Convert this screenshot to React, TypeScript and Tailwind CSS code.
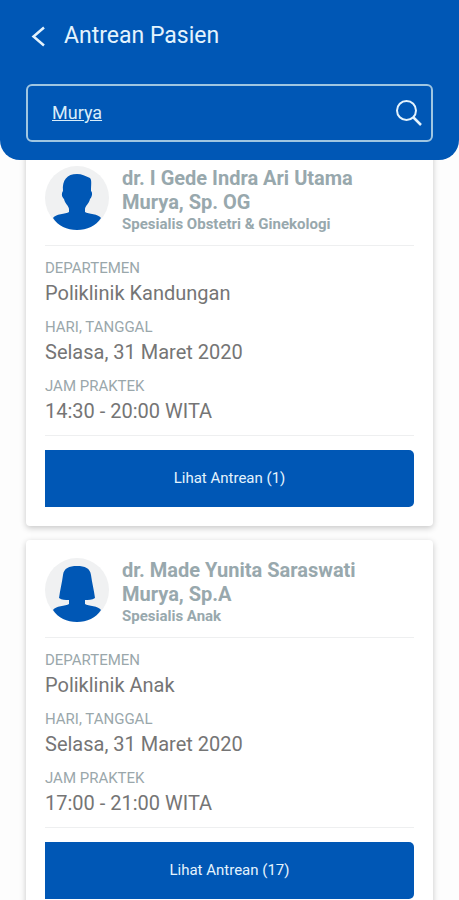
import { useState } from "react";

type Schedule = {
  name: string;
  specialty: string;
  department: string;
  date: string;
  hours: string;
  queue: number;
  avatar: "male" | "female";
};

const schedules: Schedule[] = [
  {
    name: "dr. I Gede Indra Ari Utama Murya, Sp. OG",
    specialty: "Spesialis Obstetri & Ginekologi",
    department: "Poliklinik Kandungan",
    date: "Selasa, 31 Maret 2020",
    hours: "14:30 - 20:00 WITA",
    queue: 1,
    avatar: "male",
  },
  {
    name: "dr. Made Yunita Saraswati Murya, Sp.A",
    specialty: "Spesialis Anak",
    department: "Poliklinik Anak",
    date: "Selasa, 31 Maret 2020",
    hours: "17:00 - 21:00 WITA",
    queue: 17,
    avatar: "female",
  },
];

function Avatar({ kind }: { kind: "male" | "female" }) {
  return (
    <svg viewBox="0 0 64 64" className="size-16 shrink-0" aria-hidden="true">
      <circle cx="32" cy="32" r="32" fill="#f0f1f2" />
      {kind === "male" ? (
        <path
          fill="#0057b5"
          d="M32 8C37 8 40 10 45 12C47 14 46 19 46 25C48 27 47 31 45 33C44 38 40 40 40 43V46C43 48 54 48 56 52C51 60 42 64 32 64C22 64 13 60 8 52C10 48 21 48 24 46V43C24 40 20 38 19 33C17 31 16 28 18 25C17 14 22 8 32 8Z"
        />
      ) : (
        <path
          fill="#0057b5"
          d="M32 8C40 8 45 10 46 17C47 25 49 32 50 40C47 42 43 42 40 42V46C43 48 54 48 56 52C51 60 42 64 32 64C22 64 13 60 8 52C10 48 21 48 24 46V42C20 42 17 42 14 40C15 32 17 25 18 17C19 10 24 8 32 8Z"
        />
      )}
    </svg>
  );
}

function Field({ label, value }: { label: string; value: string }) {
  return (
    <div>
      <dt className="text-[15px] leading-6 text-[#9aa7ab]">{label}</dt>
      <dd className="text-xl leading-[26px] text-[#757575]">{value}</dd>
    </div>
  );
}

function ScheduleCard({ item }: { item: Schedule }) {
  return (
    <article className="rounded bg-white px-[19px] pt-[18px] pb-[19px] shadow-[0_2px_6px_rgba(0,0,0,0.22)]">
      <div className="flex gap-[13px]">
        <Avatar kind={item.avatar} />
        <div className="min-w-0 flex-1">
          <h2 className="pr-8 text-xl leading-6 font-bold text-[#98a8ad]">{item.name}</h2>
          <p className="text-[15px] leading-5 font-bold text-[#98a8ad]">{item.specialty}</p>
        </div>
      </div>
      <dl className="mt-[11px] flex flex-col gap-[9px] border-y border-[#eeeff0] pt-[10px] pb-[11px]">
        <Field label="DEPARTEMEN" value={item.department} />
        <Field label="HARI, TANGGAL" value={item.date} />
        <Field label="JAM PRAKTEK" value={item.hours} />
      </dl>
      <button
        type="button"
        className="mt-[14px] h-[57px] w-full rounded-r-[5px] bg-[#0057b5] text-[15px] text-[#e4f3fd]"
      >
        Lihat Antrean ({item.queue})
      </button>
    </article>
  );
}

export default function App() {
  const [query, setQuery] = useState("Murya");

  return (
    <div className="flex h-screen flex-col overflow-hidden bg-[#fdfdfd] font-[Roboto,sans-serif]">
      <header className="relative z-10 shrink-0 rounded-b-[20px] bg-[#0057b5] px-[26px] pb-[18px]">
        <div className="flex h-[72px] items-center gap-4">
          <button type="button" aria-label="Kembali" className="pl-1 text-[#e4f3fd]">
            <svg viewBox="0 0 18 24" className="h-6 w-[18px]" fill="none" stroke="currentColor" strokeWidth="2.5">
              <path d="M14 3.500L3.500 12.500L14 21.500" />
            </svg>
          </button>
          <h1 className="text-[23px] leading-9 text-[#e4f3fd]">Antrean Pasien</h1>
        </div>
        <form
          className="mt-3 flex h-[58px] items-center rounded-md border-2 border-[#9fc6e2] pr-2 pl-6"
          onSubmit={(e) => e.preventDefault()}
        >
          <input
            type="text"
            aria-label="Cari dokter"
            value={query}
            onChange={(e) => setQuery(e.target.value)}
            className="min-w-0 flex-1 bg-transparent text-lg text-[#d9edf9] underline outline-none"
          />
          <button type="submit" aria-label="Cari" className="text-[#e4f3fd]">
            <svg viewBox="0 0 28 28" className="size-7" fill="none" stroke="currentColor" strokeWidth="2">
              <circle cx="11.500" cy="11.500" r="9.500" />
              <path d="M18 18L26 26" strokeWidth="2.500" />
            </svg>
          </button>
        </form>
      </header>
      <main className="-mt-3 flex min-h-0 flex-1 flex-col gap-[14px] overflow-y-auto px-[26px] pb-4 [scrollbar-width:none]">
        {schedules.map((item) => (
          <ScheduleCard key={item.name} item={item} />
        ))}
      </main>
    </div>
  );
}
